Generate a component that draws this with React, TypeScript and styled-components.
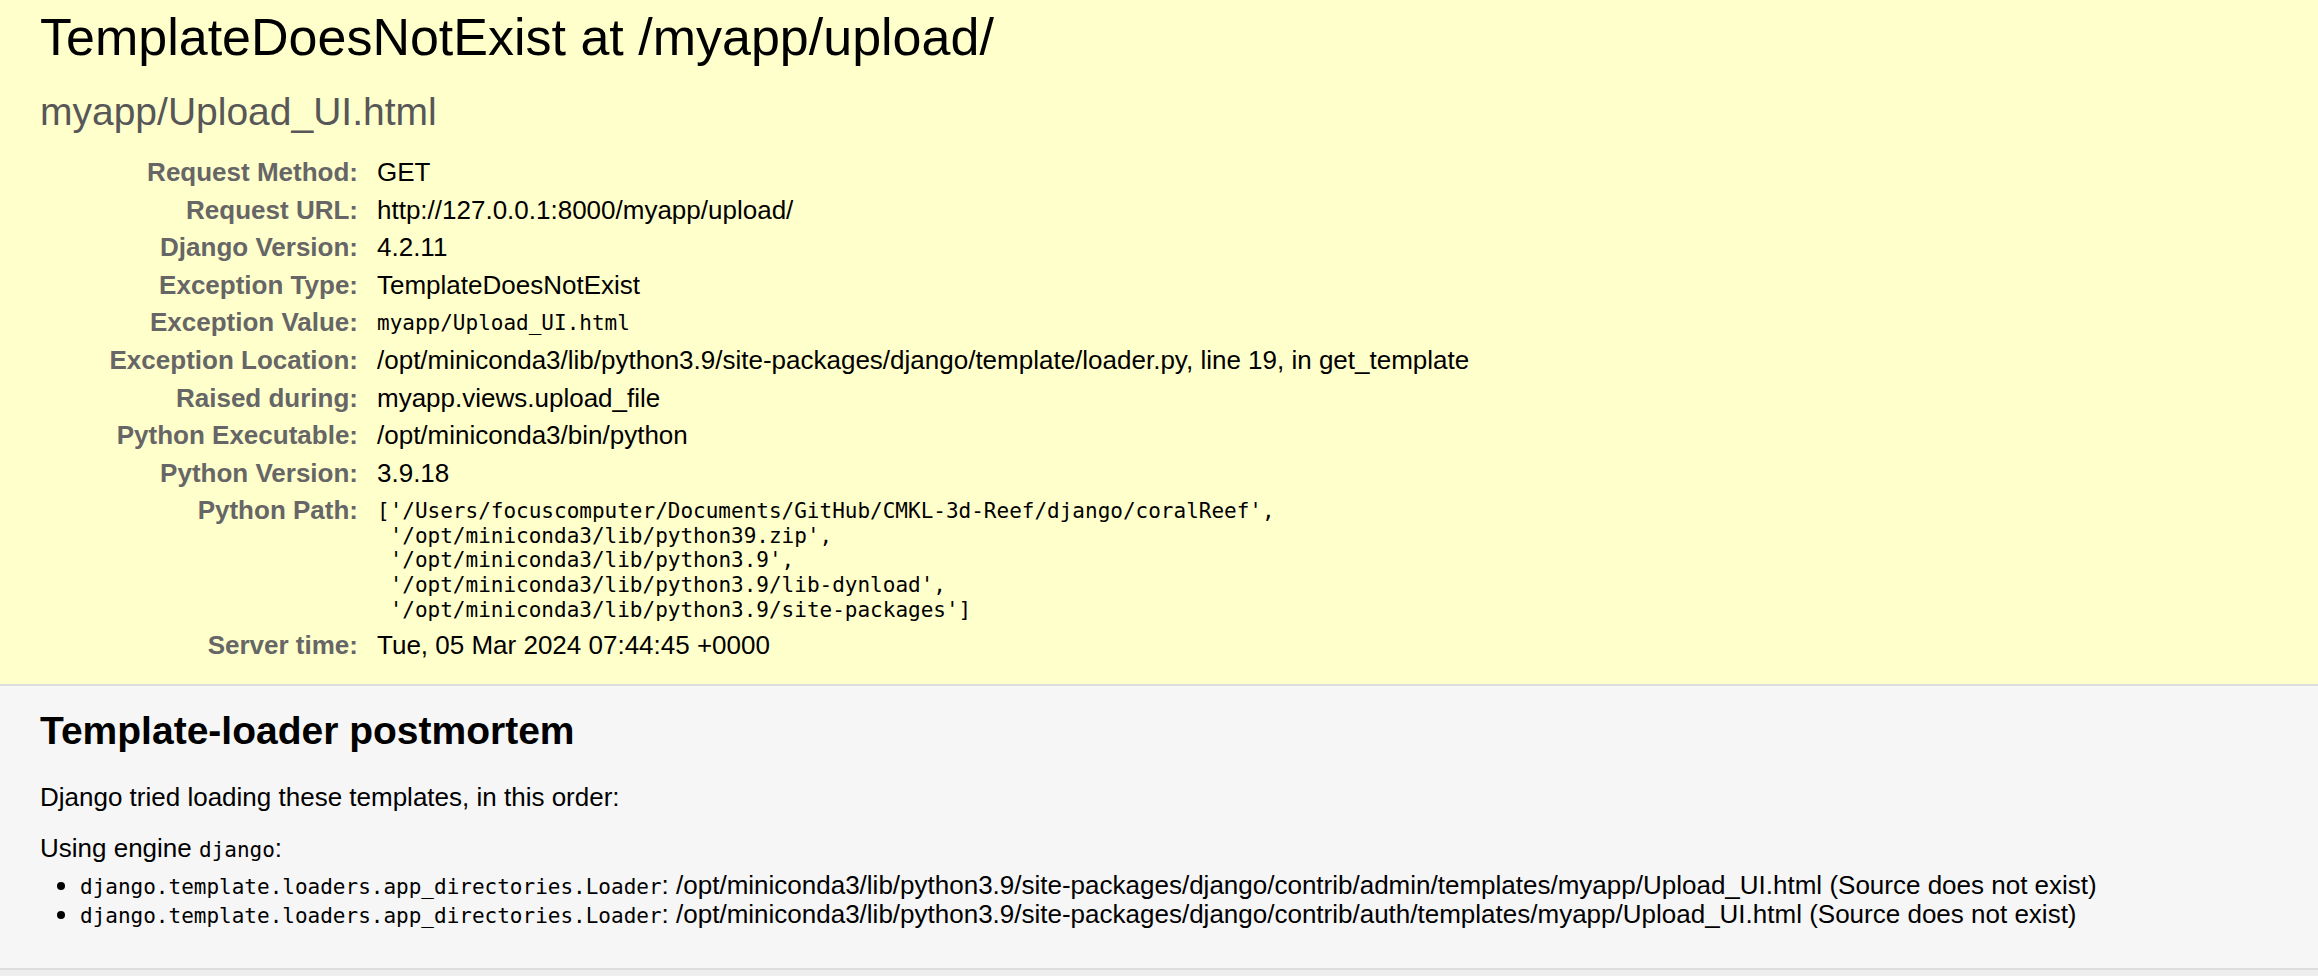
import React from "react";
import styled, { createGlobalStyle } from "styled-components";

const GlobalStyle = createGlobalStyle`
  html { overflow: hidden; }
  html, body { margin: 0; padding: 0; }
  body {
    background: #fff;
    color: #000;
    font-family: "Liberation Sans", Arial, Helvetica, sans-serif;
    font-size: 26px;
    line-height: 30px;
  }
  * { box-sizing: content-box; }
`;

const mono = `"DejaVu Sans Mono", "Liberation Mono", monospace`;

const Section = styled.div<{ $bg: string; $pad: string }>`
  background: ${(p) => p.$bg};
  padding: ${(p) => p.$pad};
  border-bottom: 2px solid #ddd;
`;

const Title = styled.h1`
  margin: 0;
  font-size: 52px;
  line-height: 60px;
  font-weight: normal;
`;

const ExceptionValue = styled.pre`
  margin: 22px 0 20px;
  font-family: "Liberation Sans", Arial, Helvetica, sans-serif;
  font-size: 39px;
  line-height: 45px;
  color: #575757;
  white-space: pre-wrap;
`;

const MetaTable = styled.table`
  border-collapse: collapse;
  border: none;
  background: transparent;
`;

const Label = styled.th`
  width: 312px;
  padding: 4px 13px 4px 6px;
  text-align: right;
  vertical-align: top;
  color: #666;
  font-weight: bold;
  font-size: 26px;
  line-height: 29.6px;
  white-space: nowrap;
`;

const Value = styled.td`
  padding: 4px 6px;
  vertical-align: top;
  font-size: 26px;
  line-height: 29.6px;
`;

const Pre = styled.pre`
  margin: 0;
  padding-top: 2.5px;
  font-family: ${mono};
  font-size: 21px;
  line-height: 24.75px;
  white-space: pre-wrap;
`;

const Heading = styled.h2`
  margin: 0 0 29px;
  font-size: 39px;
  line-height: 45px;
  font-weight: bold;
`;

const Para = styled.p<{ $gap: number }>`
  margin: 0 0 ${(p) => p.$gap}px;
  font-size: 26px;
  line-height: 30px;
`;

const Code = styled.code`
  font-family: ${mono};
  font-size: 21px;
  line-height: 24px;
`;

const LoaderList = styled.ul`
  margin: 0 0 18px 40px;
  padding: 0;
  list-style: disc outside;
`;

const LoaderItem = styled.li`
  font-size: 26px;
  line-height: 29.6px;
`;

const Trailing = styled.div`
  background: #eee;
  height: 60px;
`;

const meta: { label: string; value: string; mono?: boolean }[] = [
  { label: "Request Method:", value: "GET" },
  { label: "Request URL:", value: "http://127.0.0.1:8000/myapp/upload/" },
  { label: "Django Version:", value: "4.2.11" },
  { label: "Exception Type:", value: "TemplateDoesNotExist" },
  { label: "Exception Value:", value: "myapp/Upload_UI.html", mono: true },
  {
    label: "Exception Location:",
    value:
      "/opt/miniconda3/lib/python3.9/site-packages/django/template/loader.py, line 19, in get_template",
  },
  { label: "Raised during:", value: "myapp.views.upload_file" },
  { label: "Python Executable:", value: "/opt/miniconda3/bin/python" },
  { label: "Python Version:", value: "3.9.18" },
  {
    label: "Python Path:",
    value:
      "['/Users/focuscomputer/Documents/GitHub/CMKL-3d-Reef/django/coralReef',\n '/opt/miniconda3/lib/python39.zip',\n '/opt/miniconda3/lib/python3.9',\n '/opt/miniconda3/lib/python3.9/lib-dynload',\n '/opt/miniconda3/lib/python3.9/site-packages']",
    mono: true,
  },
  { label: "Server time:", value: "Tue, 05 Mar 2024 07:44:45 +0000" },
];

const tried = [
  "/opt/miniconda3/lib/python3.9/site-packages/django/contrib/admin/templates/myapp/Upload_UI.html",
  "/opt/miniconda3/lib/python3.9/site-packages/django/contrib/auth/templates/myapp/Upload_UI.html",
];

export default function App() {
  return (
    <>
      <GlobalStyle />
      <Section $bg="#ffc" $pad="7px 40px 20px">
        <Title>TemplateDoesNotExist at /myapp/upload/</Title>
        <ExceptionValue>myapp/Upload_UI.html</ExceptionValue>
        <MetaTable>
          <tbody>
            {meta.map((row) => (
              <tr key={row.label}>
                <Label>{row.label}</Label>
                <Value>{row.mono ? <Pre>{row.value}</Pre> : row.value}</Value>
              </tr>
            ))}
          </tbody>
        </MetaTable>
      </Section>
      <Section $bg="#f6f6f6" $pad="21.5px 40px 20px">
        <Heading>Template-loader postmortem</Heading>
        <Para $gap={21}>Django tried loading these templates, in this order:</Para>
        <Para $gap={8}>
          Using engine <Code>django</Code>:
        </Para>
        <LoaderList>
          {tried.map((t) => (
            <LoaderItem key={t}>
              <Code>django.template.loaders.app_directories.Loader</Code>: {t} (Source does not exist)
            </LoaderItem>
          ))}
        </LoaderList>
      </Section>
      <Trailing />
    </>
  );
}
